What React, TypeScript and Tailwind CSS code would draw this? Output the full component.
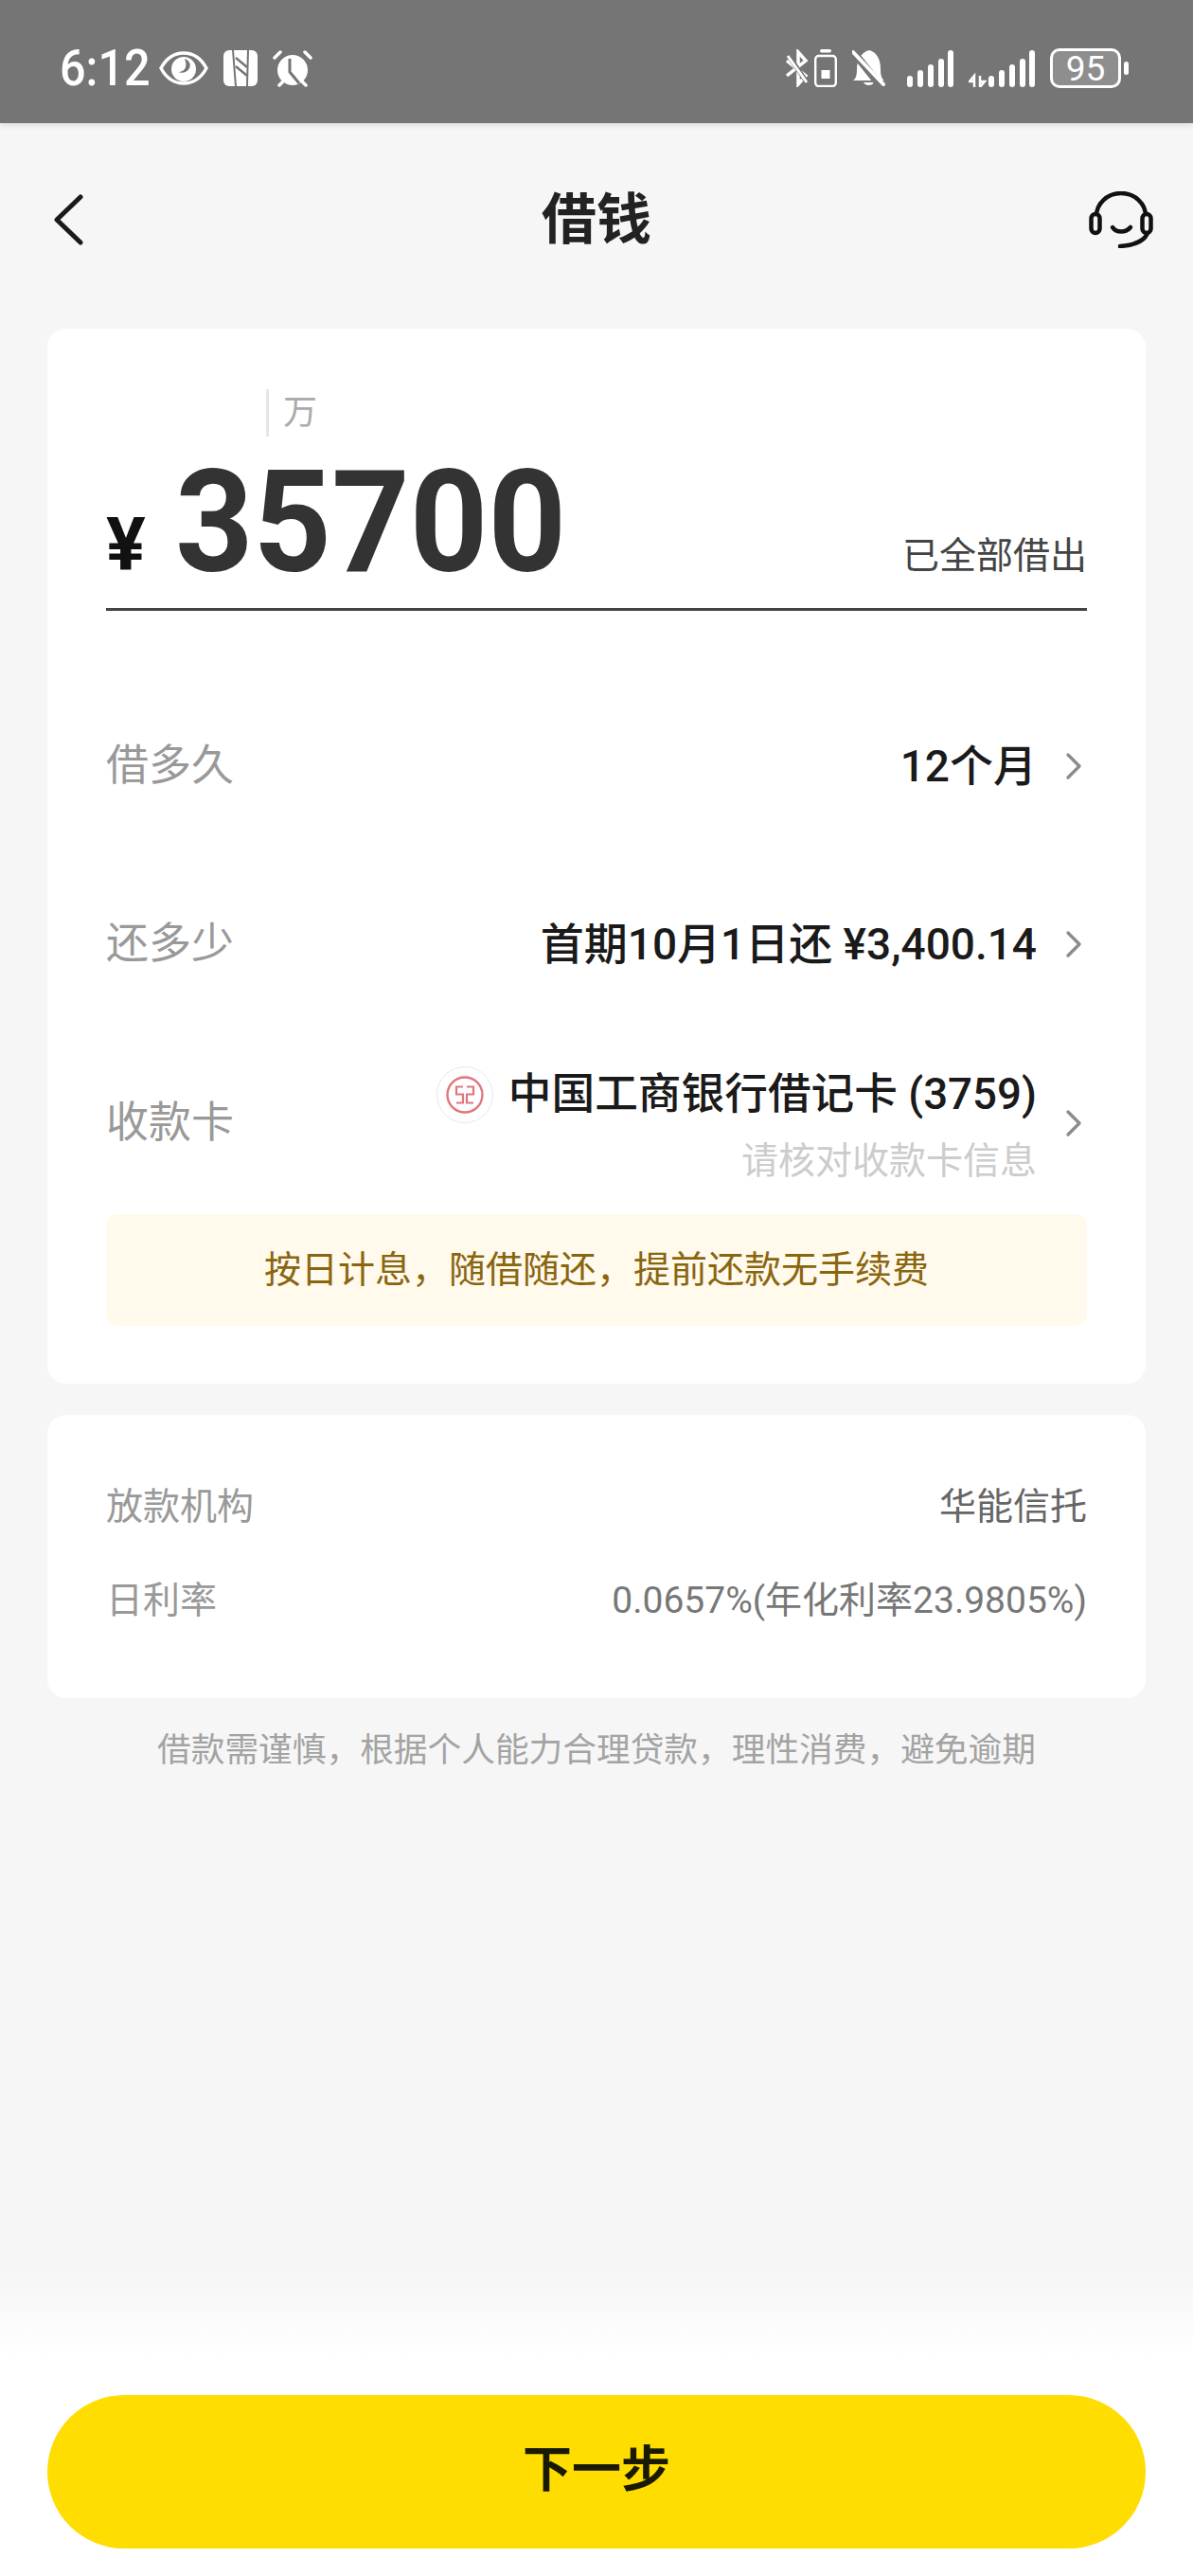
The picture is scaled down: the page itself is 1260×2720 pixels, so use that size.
const rows = [
  { label: "借多久", value: "12个月" },
  { label: "还多少", value: "首期10月1日还 ¥3,400.14" },
];

function EyeIcon() {
  return (
    <svg width="52" height="36" viewBox="0 0 52 36" className="shrink-0">
      <path d="M2 18C8 7 17 2 26 2s18 5 24 16c-6 11-15 16-24 16S8 29 2 18Z" fill="none" stroke="#fff" strokeWidth="3.5" />
      <circle cx="26" cy="19" r="13" fill="#fff" />
      <path d="M27 8c5 2 7 6 5 10s-7 6-12 4c4 0 7-2 8-5s0-6-1-9Z" fill="#757575" />
    </svg>
  );
}

function NfcIcon() {
  return (
    <svg width="36" height="38" viewBox="0 0 36 38" className="shrink-0">
      <rect width="36" height="38" rx="6" fill="#fff" />
      <path d="M10 0l3 38M26 0l-1 38" stroke="#757575" strokeWidth="2" />
      <path d="M13 8l12 10M13 17l12 10" stroke="#757575" strokeWidth="2.5" />
    </svg>
  );
}

function AlarmIcon() {
  return (
    <svg width="42" height="39" viewBox="0 0 42 39" className="shrink-0">
      <circle cx="21" cy="21" r="16" fill="#fff" />
      <path d="M2 8l6-6M40 8l-6-6M7 37l4-4M35 37l-4-4" stroke="#fff" strokeWidth="3.5" strokeLinecap="round" />
      <path d="M18 9v14l10 12" stroke="#757575" strokeWidth="3" fill="none" />
    </svg>
  );
}

function BluetoothIcon() {
  return (
    <svg width="25" height="40" viewBox="0 0 25 40" className="shrink-0">
      <path d="M1 12l20 16-8 9V3l8 9L1 28" fill="none" stroke="#fff" strokeWidth="3.5" />
      <path d="M1 4l22 32" stroke="#757575" strokeWidth="5" />
      <path d="M2 7l20 28" stroke="#fff" strokeWidth="3" />
    </svg>
  );
}

function BatterySaverIcon() {
  return (
    <svg width="24" height="40" viewBox="0 0 24 40" className="shrink-0">
      <rect x="6" y="0" width="12" height="3.5" rx="1.7" fill="#fff" />
      <rect x="1.2" y="7" width="21.6" height="32" rx="3.5" fill="none" stroke="#fff" strokeWidth="2.4" />
      <rect x="7.5" y="22" width="9" height="9" fill="#fff" />
    </svg>
  );
}

function BellOffIcon() {
  return (
    <svg width="35" height="40" viewBox="0 0 35 40" className="shrink-0">
      <path d="M1 33c3-2 4-6 4-12C5 11 10 3 18 1c8 2 12 10 12 20 0 6 1 10 4 12Z" fill="#fff" />
      <path d="M12 35a6 5 0 0 0 11 0Z" fill="#fff" />
      <path d="M-1 0l32 40" stroke="#757575" strokeWidth="8" />
      <path d="M1 3l32 34" stroke="#fff" strokeWidth="4" strokeLinecap="round" />
    </svg>
  );
}

function SignalBars() {
  return (
    <svg width="49" height="39" viewBox="0 0 49 39" className="shrink-0">
      <rect x="0" y="27" width="6" height="12" rx="3" fill="#fff" />
      <rect x="11" y="21" width="6" height="18" rx="3" fill="#fff" />
      <rect x="22" y="15" width="6" height="24" rx="3" fill="#fff" />
      <rect x="33" y="9" width="6" height="30" rx="3" fill="#fff" />
      <rect x="43" y="0" width="6" height="39" rx="3" fill="#fff" />
    </svg>
  );
}

function SignalData() {
  return (
    <svg width="70" height="39" viewBox="0 0 70 39" className="shrink-0">
      <path d="M6 39V27l-5 6h5M12 27v12l5-6h-5" stroke="#fff" strokeWidth="2.5" fill="none" />
      <rect x="21" y="27" width="6" height="12" rx="3" fill="#fff" />
      <rect x="32" y="21" width="6" height="18" rx="3" fill="#fff" />
      <rect x="43" y="15" width="6" height="24" rx="3" fill="#fff" />
      <rect x="54" y="9" width="6" height="30" rx="3" fill="#fff" />
      <rect x="64" y="0" width="6" height="39" rx="3" fill="#fff" />
    </svg>
  );
}

function BankLogo() {
  return (
    <div className="w-[60px] h-[60px] rounded-full border border-[#e8e8e8] bg-white flex items-center justify-center shrink-0">
      <svg width="42" height="42" viewBox="0 0 42 42">
        <circle cx="21" cy="21" r="18.5" fill="none" stroke="#e0767c" strokeWidth="2.4" />
        <path d="M19 12.5h-7v8h7v9h-7M23 12.5h7v8h-7v9h7" fill="none" stroke="#e0767c" strokeWidth="2.2" />
      </svg>
    </div>
  );
}

function RowChevron() {
  return (
    <svg width="18" height="30" viewBox="0 0 18 30" className="ml-[30px] mr-[5px] shrink-0">
      <path d="M3 3l12 12L3 27" fill="none" stroke="#8c8c8c" strokeWidth="3.4" strokeLinecap="round" strokeLinejoin="round" />
    </svg>
  );
}

export default function App() {
  return (
    <div className="w-[1260px] h-[2720px] flex flex-col bg-[#f6f6f6] font-['Roboto','Noto_Sans_CJK_SC',sans-serif] overflow-hidden">
      <div className="h-[130px] shrink-0 bg-[#757575] flex items-center justify-between pt-[14px] pl-[63px] pr-[68px] shadow-[0_2px_6px_rgba(0,0,0,0.12)]">
        <div className="flex items-center">
          <span className="w-[105px] text-[54px] leading-none font-medium text-white origin-left scale-x-[0.9] inline-block">6:12</span>
          <div className="flex items-center gap-[16px]">
            <EyeIcon />
            <NfcIcon />
            <AlarmIcon />
          </div>
        </div>
        <div className="flex items-center">
          <BluetoothIcon />
          <div className="ml-[5px]"><BatterySaverIcon /></div>
          <div className="ml-[16px]"><BellOffIcon /></div>
          <div className="ml-[23px]"><SignalBars /></div>
          <div className="ml-[16px]"><SignalData /></div>
          <div className="ml-[16px] w-[75px] h-[42px] rounded-[10px] border-[3px] border-white bg-[#8e8e8e] flex items-center justify-center text-white text-[37px] leading-none">
            95
          </div>
          <div className="ml-[3px] w-[5px] h-[14px] rounded-full bg-white" />
        </div>
      </div>

      <div className="h-[217px] shrink-0 flex items-center justify-between px-[42px] pb-[14px]">
        <div className="w-[100px] pl-[12px] flex">
          <svg width="36" height="56" viewBox="0 0 36 56">
            <path d="M31 4 6 28l25 24" fill="none" stroke="#1a1a1a" strokeWidth="5" strokeLinecap="round" strokeLinejoin="round" />
          </svg>
        </div>
        <h1 className="text-[58px] leading-none font-bold text-[#222]">借钱</h1>
        <div className="w-[100px] flex justify-end">
          <svg width="68" height="60" viewBox="0 0 68 60">
            <path d="M8 26a26 24 0 0 1 52 0" fill="none" stroke="#111" strokeWidth="4.5" />
            <rect x="2.5" y="24" width="9" height="20" rx="4.5" fill="none" stroke="#111" strokeWidth="4.5" />
            <rect x="56.5" y="24" width="9" height="20" rx="4.5" fill="none" stroke="#111" strokeWidth="4.5" />
            <path d="M25 38c4 6 14 6 19 0" fill="none" stroke="#111" strokeWidth="4.5" strokeLinecap="round" />
            <path d="M62 44c-3 8-14 13-29 14" fill="none" stroke="#111" strokeWidth="4.5" strokeLinecap="round" />
          </svg>
        </div>
      </div>

      <div className="mx-[50px] bg-white rounded-[20px] px-[62px] pt-[64px] pb-[61px]">
        <div className="flex items-center pl-[169px] h-[50px]">
          <div className="w-[3px] h-[50px] bg-[#e6e6e6]" />
          <span className="ml-[15px] text-[36px] leading-none text-[#aaaaaa]">万</span>
        </div>
        <div className="h-[184px] border-b-[3px] border-[#444] flex items-end justify-between pb-[15px]">
          <div className="flex items-end">
            <span className="text-[78px] leading-none font-bold text-[#111] mb-[12px]">¥</span>
            <span className="ml-[31px] text-[150px] leading-none font-bold text-[#333] inline-block origin-left scale-x-[0.96]">35700</span>
          </div>
          <span className="text-[39px] leading-none text-[#444] mb-[20px]">已全部借出</span>
        </div>

        <div className="mt-[104px] flex flex-col">
          {rows.map((row) => (
            <div key={row.label} className="h-[120px] mb-[68px] flex items-center justify-between">
              <span className="text-[45px] text-[#999]">{row.label}</span>
              <div className="flex items-center">
                <span className="text-[46px] font-medium text-[#1a1a1a]">{row.value}</span>
                <RowChevron />
              </div>
            </div>
          ))}
          <div className="h-[120px] mt-[1px] flex items-center justify-between">
            <span className="text-[45px] text-[#999]">收款卡</span>
            <div className="flex items-center">
              <div className="flex flex-col items-end">
                <div className="flex items-center gap-[16px]">
                  <BankLogo />
                  <span className="text-[45.7px] leading-none font-medium text-[#1a1a1a]">中国工商银行借记卡 (3759)</span>
                </div>
                <span className="mt-[21px] text-[39px] leading-none text-[#cccccc]">请核对收款卡信息</span>
              </div>
              <RowChevron />
            </div>
          </div>
        </div>

        <div className="mt-[36px] h-[118px] rounded-[12px] bg-[#fffaeb] flex items-center justify-center text-[39px] text-[#8a6510]">
          按日计息，随借随还，提前还款无手续费
        </div>
      </div>

      <div className="mt-[33px] mx-[50px] h-[299px] bg-white rounded-[20px] px-[62px] pt-[72px] flex flex-col gap-[49px]">
        <div className="h-[50px] flex items-center justify-between text-[39px]">
          <span className="text-[#999]">放款机构</span>
          <span className="text-[#666]">华能信托</span>
        </div>
        <div className="h-[50px] flex items-center justify-between text-[39px]">
          <span className="text-[#999]">日利率</span>
          <span className="text-[#777]">0.0657%(年化利率23.9805%)</span>
        </div>
      </div>

      <p className="mt-[38px] text-center text-[35.7px] leading-none text-[#a3a3a3]">借款需谨慎，根据个人能力合理贷款，理性消费，避免逾期</p>

      <div className="mt-auto">
        <div className="h-[90px] bg-gradient-to-b from-[#f6f6f6] to-white" />
        <div className="bg-white px-[50px] pt-[39px] pb-[29px]">
          <button className="w-full h-[162px] rounded-full bg-[#ffdd00] text-[52px] font-bold text-[#1a1a00] pb-[2px]">下一步</button>
        </div>
      </div>
    </div>
  );
}
